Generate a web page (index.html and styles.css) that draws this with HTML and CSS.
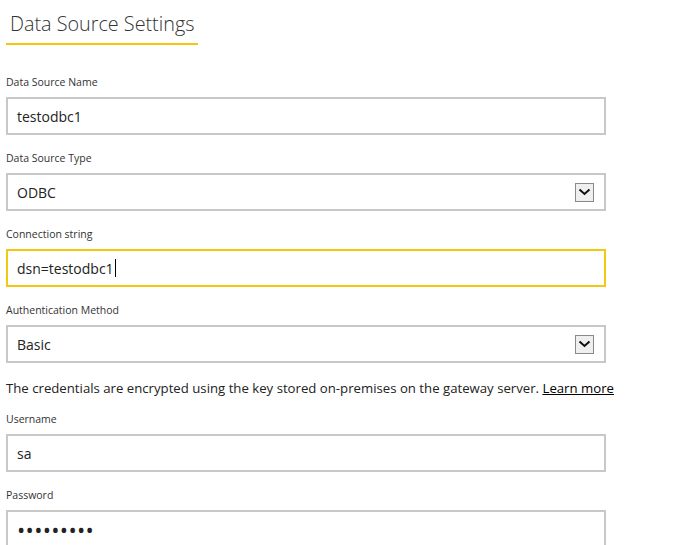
FILE: index.html
```html
<!DOCTYPE html>
<html>
<head>
<meta charset="utf-8">
<link rel="stylesheet" href="styles.css">
</head>
<body>
<div class="page">
  <div class="title-wrap"><h1 class="title">Data Source Settings</h1></div>

  <div class="field">
    <div class="label">Data Source Name</div>
    <div class="box"><span class="value">testodbc1</span></div>
  </div>

  <div class="field">
    <div class="label">Data Source Type</div>
    <div class="box select"><span class="value">ODBC</span>
      <span class="drop"><svg width="13" height="8" viewBox="0 0 13 8"><path d="M1.5 1.5 L6.5 6 L11.5 1.5" fill="none" stroke="#111" stroke-width="2"/></svg></span>
    </div>
  </div>

  <div class="field">
    <div class="label">Connection string</div>
    <div class="box focus"><span class="value">dsn=testodbc1</span><span class="caret"></span></div>
  </div>

  <div class="field">
    <div class="label">Authentication Method</div>
    <div class="box select"><span class="value">Basic</span>
      <span class="drop"><svg width="13" height="8" viewBox="0 0 13 8"><path d="M1.5 1.5 L6.5 6 L11.5 1.5" fill="none" stroke="#111" stroke-width="2"/></svg></span>
    </div>
  </div>

  <p class="note">The credentials are encrypted using the key stored on-premises on the gateway server. <a class="link" href="#">Learn more</a></p>

  <div class="field">
    <div class="label">Username</div>
    <div class="box"><span class="value">sa</span></div>
  </div>

  <div class="field">
    <div class="label">Password</div>
    <div class="box"><span class="dots">•••••••••</span></div>
  </div>
</div>
</body>
</html>
```
FILE: styles.css
```css
html, body {
  margin: 0;
  padding: 0;
  background: #ffffff;
}
body {
  font-family: "Open Sans", "Noto Sans", sans-serif;
  color: #333333;
  overflow: hidden;
}
.page {
  padding: 0 6px;
  width: 600px;
}
.title-wrap {
  padding-top: 11px;
  margin-bottom: 28px;
}
.title {
  display: inline-block;
  margin: 0;
  padding: 0 4px 6px 4px;
  font-size: 19.8px;
  font-weight: 300;
  line-height: 26px;
  color: #333333;
  border-bottom: 2px solid #f2c811;
}
.field {
  margin-bottom: 14px;
}
.label {
  font-size: 10.5px;
  line-height: 18px;
  height: 16px;
  margin-bottom: 8px;
  color: #333333;
}
.box {
  box-sizing: border-box;
  height: 38px;
  border: 2px solid #c8c8c8;
  display: flex;
  align-items: center;
  padding: 0 9px;
  font-size: 14px;
  color: #222222;
}
.box.focus {
  border-color: #f2c811;
}
.select {
  justify-content: space-between;
}
.drop {
  width: 19px;
  height: 19px;
  box-sizing: border-box;
  border: 1px solid #8a8a8a;
  background: #efefef;
  display: flex;
  align-items: center;
  justify-content: center;
  margin-right: 1px;
}
.caret {
  display: inline-block;
  width: 1px;
  height: 18px;
  background: #000;
  margin-left: 1px;
}
.note {
  margin: 0 0 11px 0;
  font-size: 13.2px;
  line-height: 22px;
  white-space: nowrap;
  color: #222222;
}
.link {
  color: #000000;
  text-decoration: underline;
}
.dots {
  font-size: 22px;
  letter-spacing: 0.3px;
  color: #222;
  line-height: 20px;
}
```
